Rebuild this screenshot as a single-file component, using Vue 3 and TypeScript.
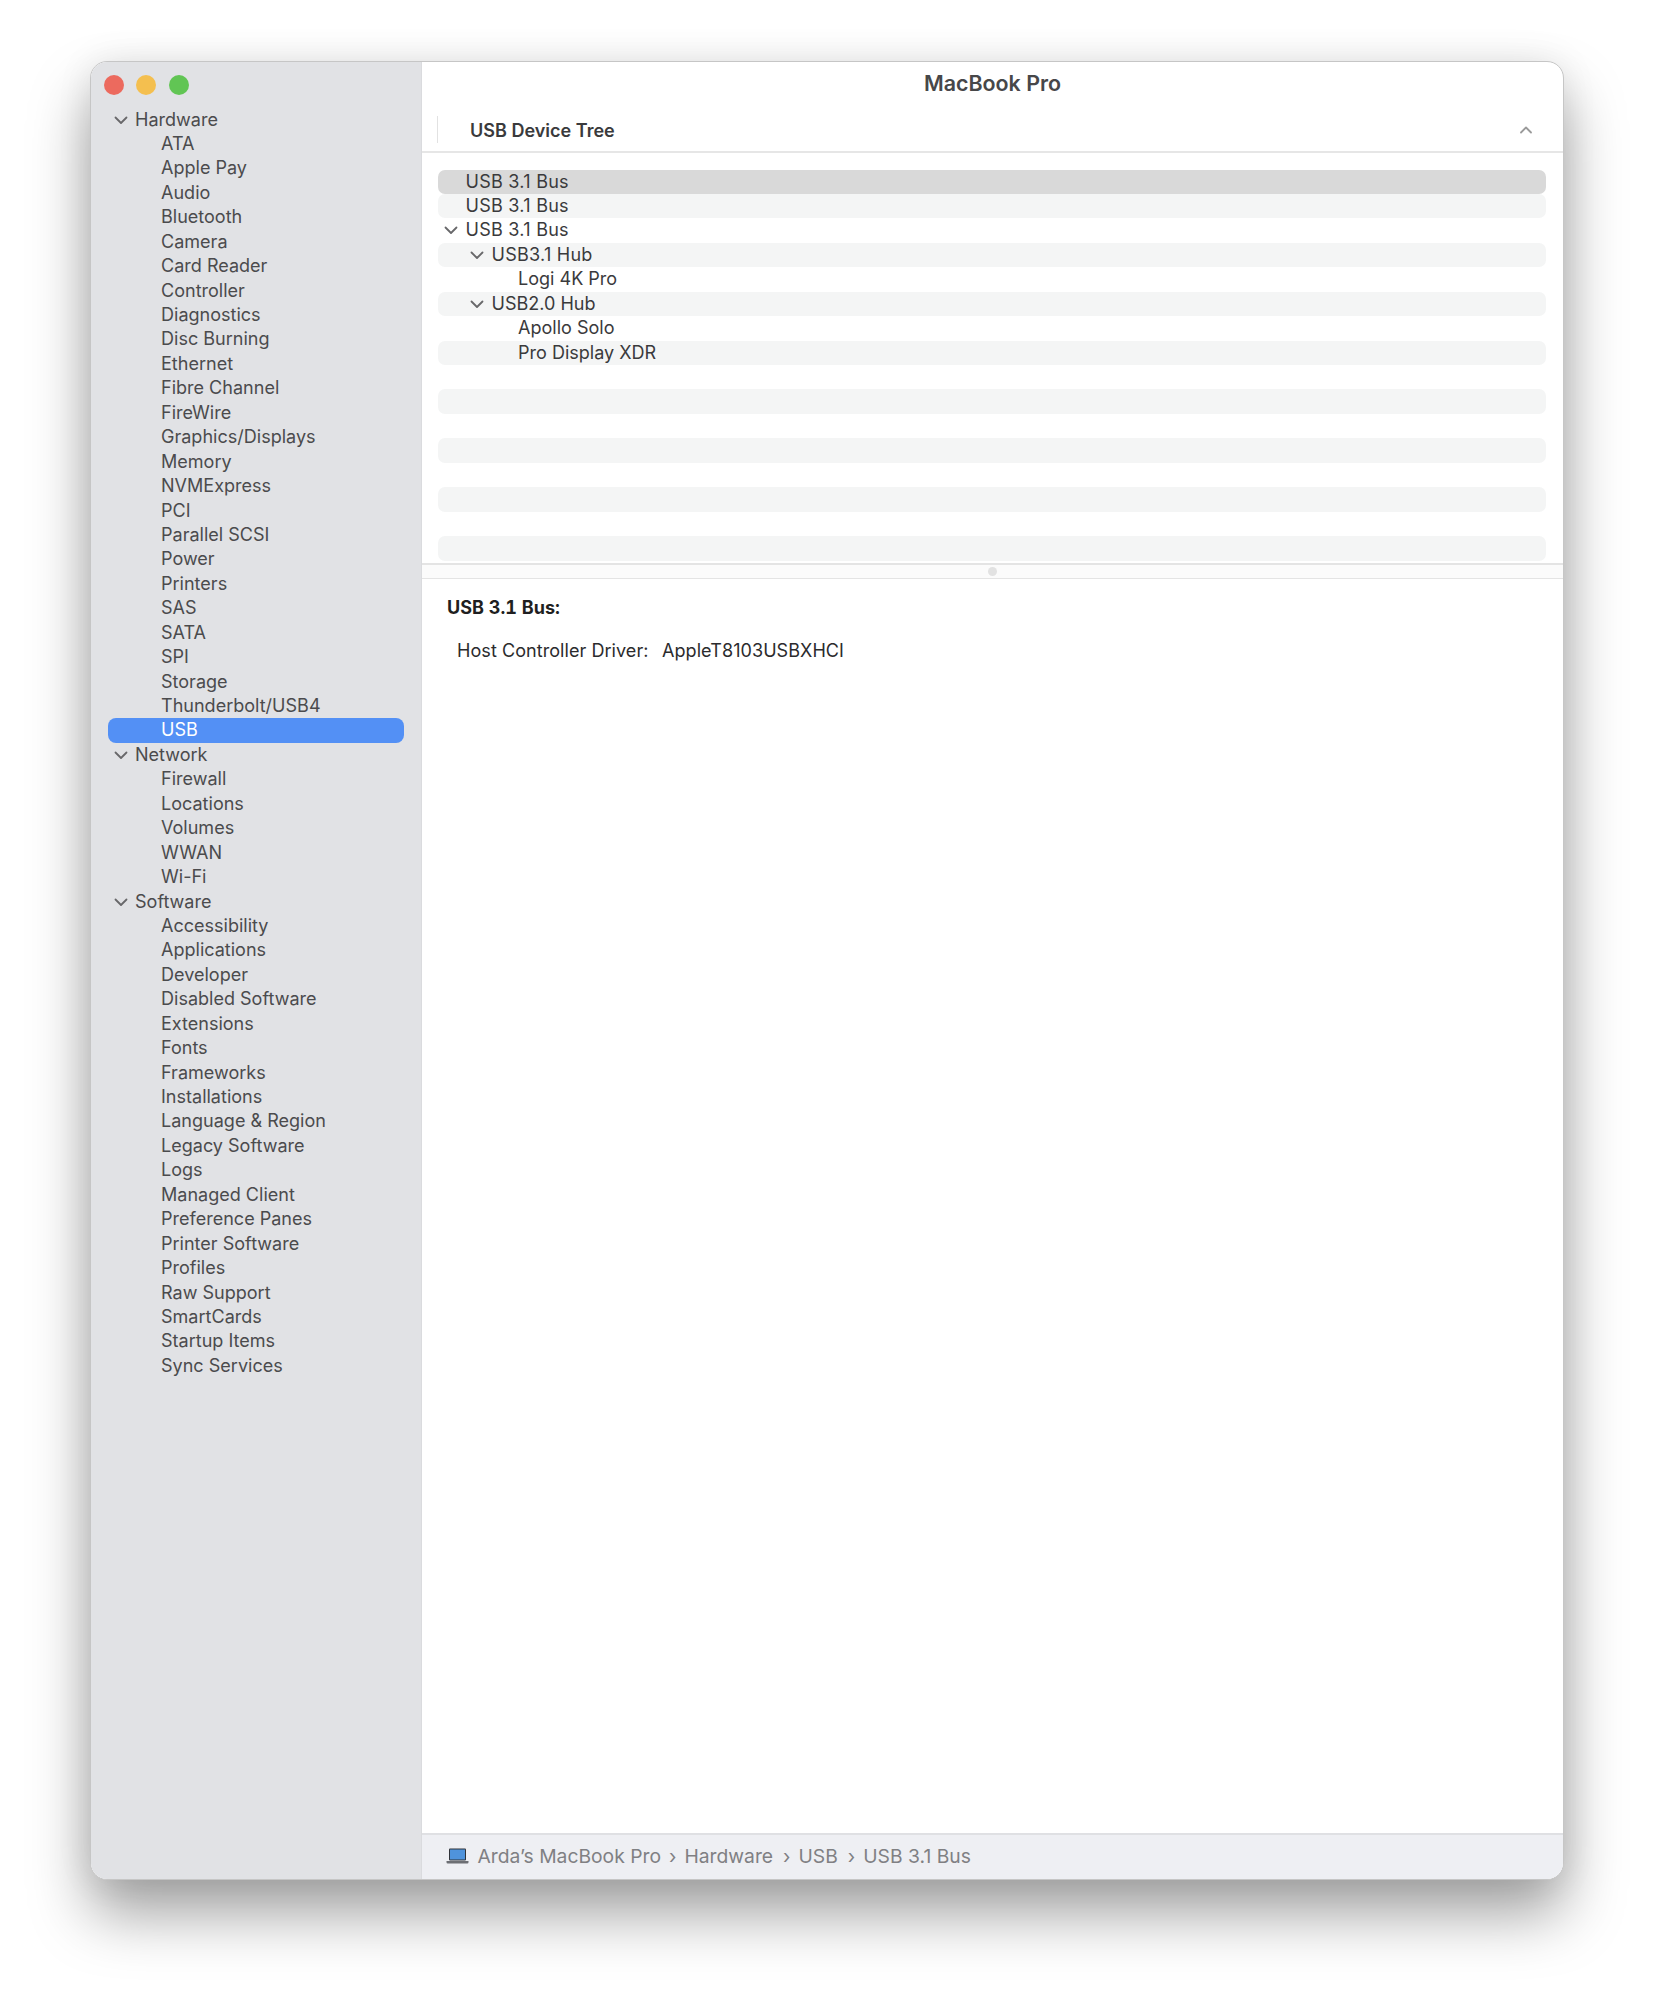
<script setup lang="ts">
type Side = { label: string; group?: boolean; selected?: boolean };
const groups: Record<string, string[]> = {
  Hardware: ['ATA','Apple Pay','Audio','Bluetooth','Camera','Card Reader','Controller','Diagnostics','Disc Burning','Ethernet','Fibre Channel','FireWire','Graphics/Displays','Memory','NVMExpress','PCI','Parallel SCSI','Power','Printers','SAS','SATA','SPI','Storage','Thunderbolt/USB4','USB'],
  Network: ['Firewall','Locations','Volumes','WWAN','Wi-Fi'],
  Software: ['Accessibility','Applications','Developer','Disabled Software','Extensions','Fonts','Frameworks','Installations','Language & Region','Legacy Software','Logs','Managed Client','Preference Panes','Printer Software','Profiles','Raw Support','SmartCards','Startup Items','Sync Services'],
};
const side: Side[] = [];
for (const g of Object.keys(groups)) {
  side.push({ label: g, group: true });
  for (const c of groups[g]) side.push({ label: c, selected: c === 'USB' });
}
type Row = { label: string; level: number; open?: boolean };
const rows: Row[] = [
  { label: 'USB 3.1 Bus', level: 0 },
  { label: 'USB 3.1 Bus', level: 0 },
  { label: 'USB 3.1 Bus', level: 0, open: true },
  { label: 'USB3.1 Hub', level: 1, open: true },
  { label: 'Logi 4K Pro', level: 2 },
  { label: 'USB2.0 Hub', level: 1, open: true },
  { label: 'Apollo Solo', level: 2 },
  { label: 'Pro Display XDR', level: 2 },
  ...Array.from({ length: 8 }, () => ({ label: '', level: 0 })),
];
const crumbs = ['Arda\u2019s MacBook Pro', 'Hardware', 'USB', 'USB 3.1 Bus'];
</script>

<template>
  <div class="page">
    <div class="window">
      <aside class="sidebar">
        <div class="lights"><i class="red"></i><i class="yellow"></i><i class="green"></i></div>
        <div v-for="(s, i) in side" :key="i" class="side-row" :class="{ group: s.group, selected: s.selected }">
          <svg v-if="s.group" class="chev" width="14" height="9" viewBox="0 0 14 9"><path d="M1.5 1.5 7 7l5.5-5.5" /></svg>
          <span>{{ s.label }}</span>
        </div>
      </aside>
      <main class="main">
        <div class="title">MacBook Pro</div>
        <div class="tree-head">
          <span class="head-sep"></span>
          <span class="head-label">USB Device Tree</span>
          <svg class="up" width="12" height="8" viewBox="0 0 12 8"><path d="M1 6.5 6 1.5l5 5" /></svg>
        </div>
        <div class="tree">
          <div v-for="(r, i) in rows" :key="i" class="tree-row" :class="{ sel: i === 0, alt: i % 2 === 1, wide: r.label.includes('3.1') }">
            <span class="indent" :class="'lvl' + r.level">
              <svg v-if="r.open" class="chev" width="14" height="9" viewBox="0 0 14 9"><path d="M1.5 1.5 7 7l5.5-5.5" /></svg>
            </span>
            <span>{{ r.label }}</span>
          </div>
        </div>
        <div class="splitter"><i></i></div>
        <div class="detail">
          <div class="detail-title">USB 3.1 Bus:</div>
          <div class="detail-line"><span class="key">Host Controller Driver:</span><span>AppleT8103USBXHCI</span></div>
        </div>
        <div class="status">
          <svg class="mac" width="23" height="16" viewBox="0 0 23 16">
            <rect x="3" y="0.5" width="17" height="12" rx="1" fill="#2f3238" />
            <rect x="4" y="1.5" width="15" height="10" fill="#4f93dc" />
            <path d="M0.5 13h22v1.3a1.2 1.2 0 0 1-1.2 1.2H1.7a1.2 1.2 0 0 1-1.2-1.2z" fill="#6d6f74" />
          </svg>
          <template v-for="(c, i) in crumbs" :key="i">
            <span v-if="i > 0" class="sep" :class="{ tight: i === 1 }">›</span>
            <span class="crumb">{{ c }}</span>
          </template>
        </div>
      </main>
    </div>
  </div>
</template>

<style scoped>
.page {
  width: 1654px;
  height: 2000px;
  box-sizing: border-box;
  padding: 61px 0 0 90px;
  background: #fff;
  font-family: Inter, "Liberation Sans", sans-serif;
  font-size: 18.05px;
  overflow: hidden;
}
.window {
  width: 1474px;
  height: 1819px;
  box-sizing: border-box;
  display: flex;
  border: 1px solid #c6c6c6;
  border-radius: 17px;
  overflow: hidden;
  background: #fff;
}
.page .window { box-shadow: 0 34px 60px rgba(0, 0, 0, 0.37), 0 0 36px rgba(0, 0, 0, 0.08); }
.sidebar {
  width: 331px;
  flex: none;
  box-sizing: border-box;
  background: #e1e2e5;
  padding: 0 17px 0 16.5px;
  border-right: 1px solid #dadbde;
}
.lights {
  height: 45.5px;
  display: flex;
  align-items: flex-start;
  gap: 12.7px;
  margin-left: -4px;
  padding-top: 12.5px;
  box-sizing: border-box;
}
.lights i { width: 20px; height: 20px; border-radius: 50%; display: block; }
.red { background: #ec6a5e; }
.yellow { background: #f4bf4f; }
.green { background: #61c554; }
.side-row {
  height: 24.45px;
  line-height: 24.45px;
  padding-left: 53.5px;
  color: #4b4b4d;
  position: relative;
  white-space: nowrap;
  border-radius: 8px;
}
.side-row.group { padding-left: 27.5px; }
.side-row.group .chev { position: absolute; left: 6px; top: 8px; }
.side-row.selected { background: #5390f5; color: #fff; }
.chev path, .up path { fill: none; stroke: #68686a; stroke-width: 1.8; stroke-linecap: round; stroke-linejoin: round; }
.up path { stroke: #9a9a9a; }
.main { flex: 1; min-width: 0; display: flex; flex-direction: column; }
.title {
  height: 45px;
  line-height: 43.5px;
  text-align: center;
  font-weight: 600;
  font-size: 21.4px;
  color: #474749;
  flex: none;
}
.tree-head {
  height: 46px;
  flex: none;
  box-sizing: border-box;
  border-bottom: 2px solid #e6e6e6;
  display: flex;
  align-items: center;
  padding: 2px 31px 0 15px;
  color: #3a3a3c;
}
.head-sep { width: 1px; height: 27px; background: #e2e2e2; margin: -2px 32px 0 0; }
.head-label { font-weight: 600; flex: 1; }
.tree { padding: 16.5px 17px 2.5px 16px; flex: none; }
.tree-row {
  height: 24.45px;
  line-height: 24.45px;
  display: flex;
  align-items: center;
  border-radius: 7px;
  color: #3a3a3c;
  white-space: nowrap;
}
.tree-row.wide { letter-spacing: 0.25px; }
.tree-row.alt { background: #f4f5f5; }
.tree-row.sel { background: #d9d9d9; }
.indent { flex: none; position: relative; height: 100%; display: block; }
.lvl0 { width: 27.5px; }
.lvl1 { width: 53.5px; }
.lvl2 { width: 80px; }
.indent .chev { position: absolute; right: 7.5px; top: 8px; }
.splitter {
  flex: none;
  height: 16px;
  box-sizing: border-box;
  border-top: 2px solid #e4e4e4;
  border-bottom: 1px solid #e4e4e4;
  background: #fbfbfb;
  position: relative;
}
.splitter i {
  position: absolute;
  left: 50%;
  top: 2px;
  width: 9px;
  height: 9px;
  margin-left: -5px;
  border-radius: 50%;
  background: #e2e2e2;
}
.detail { flex: 1; padding: 16.5px 0 0 25px; color: #2b2b2d; }
.detail-title { font-weight: 700; color: #1f1f21; line-height: 24px; font-variant-numeric: tabular-nums; }
.detail-line { margin-top: 19.5px; padding-left: 10px; line-height: 24px; display: flex; letter-spacing: 0.05px; }
.key { width: 205px; flex: none; }
.status {
  height: 46px;
  flex: none;
  box-sizing: border-box;
  background: #eeeff3;
  border-top: 2px solid #dfe0e3;
  display: flex;
  align-items: center;
  padding: 0 0 2px 23.5px;
  color: #808083;
  white-space: nowrap;
  font-size: 19.3px;
}
.mac { margin-right: 9px; }
.sep { margin: 0 8px 0 10px; }
.sep.tight { margin: 0 8px 0 8px; }
</style>

<style>
html, body { margin: 0; background: #fff; }
</style>
